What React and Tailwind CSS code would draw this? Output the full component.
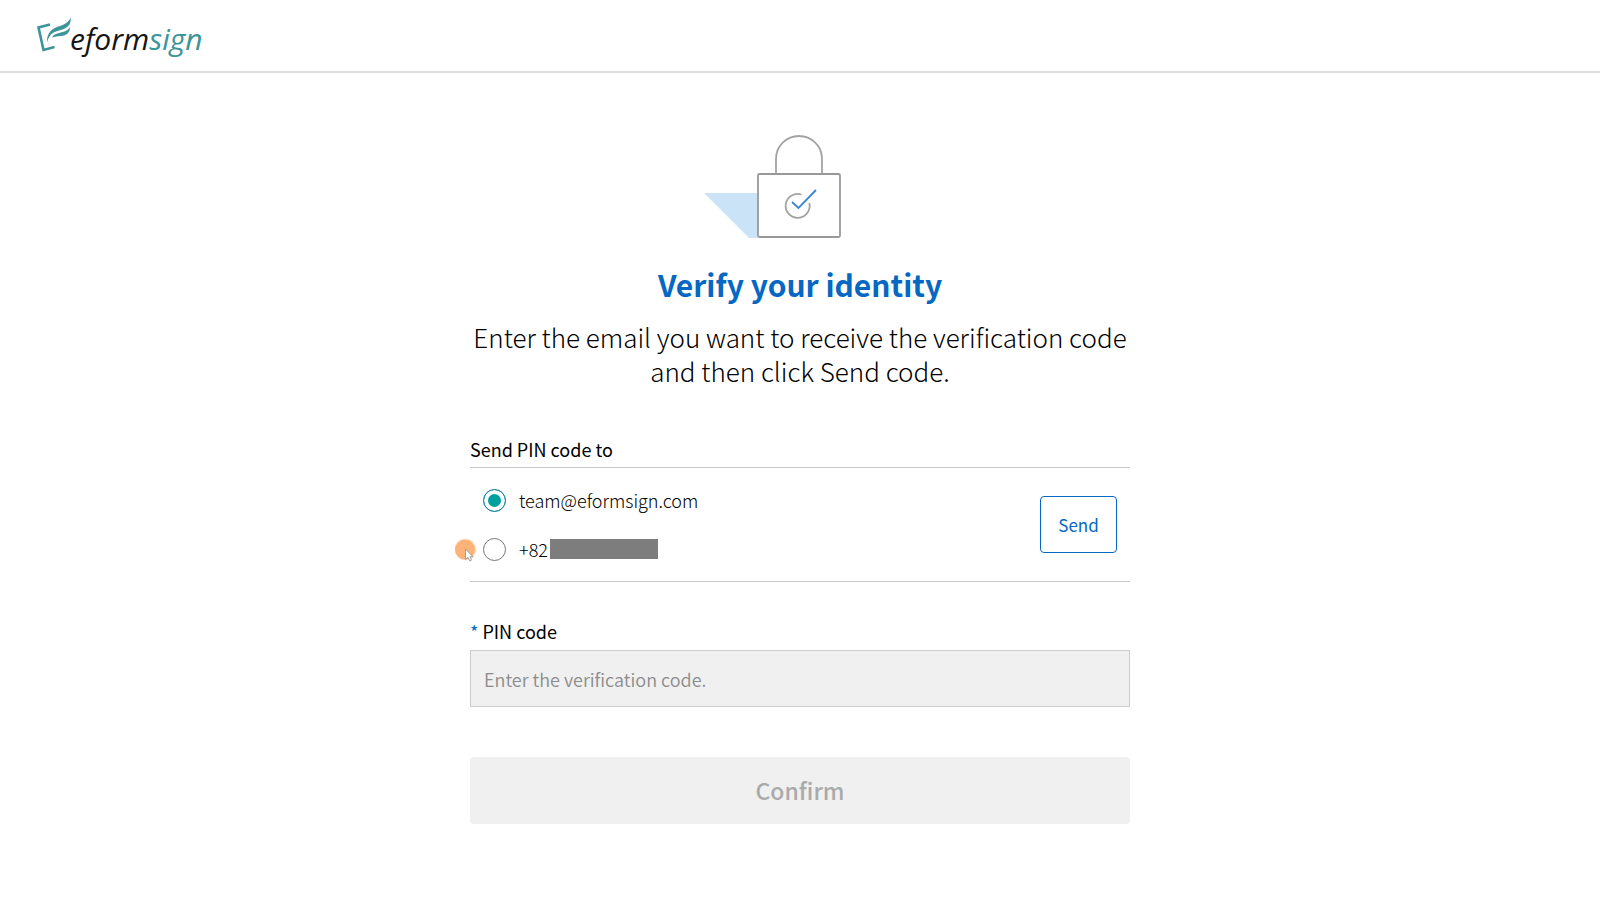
function Logo() {
  return (
    <a href="#" aria-label="eformsign home" className="flex items-end">
      <svg className="mb-0.5 h-10 w-9" viewBox="0 0 36 40" fill="none" aria-hidden="true">
        <path d="M14 9.500 L2.500 12.500 L7.500 35 L18.500 32" stroke="#3d949a" strokeWidth="2.600" />
        <path d="M11 27.500 C10.500 17 17 13 24 11 C30 9 34 6 34.500 2 C36 9.500 31 14 23 15.500 C16.500 17 13 20 11 27.500 Z" fill="#3d949a" />
        <path d="M16 22.500 C18 18.500 23 18 27 17 C31 16 33 14 34 11.500 C34 18 30.500 20.500 25 21 C21.500 21.500 19 21.500 16 22.500 Z" fill="#3d949a" />
      </svg>
      <span className="-ml-0.5 font-['Open_Sans','Noto_Sans',sans-serif] text-[30px] leading-9 italic text-[#151515]">
        eform<span className="text-[#3d949a]">sign</span>
      </span>
    </a>
  );
}

function LockArt() {
  return (
    <svg className="h-[106px] w-48" viewBox="0 0 192 106" fill="none" aria-hidden="true">
      <path d="M0 59 H54 V104 H45 Z" fill="#cbe3f7" />
      <path d="M72 39 V25 A23 23 0 0 1 118 25 V39" stroke="#a3a3a3" strokeWidth="1.800" />
      <rect x="54" y="40" width="82" height="63" rx="1.500" fill="#fff" stroke="#999" strokeWidth="1.800" />
      <path d="M97.500 60.500 A12 12 0 1 0 105.300 69" stroke="#a3a3a3" strokeWidth="1.800" />
      <path d="M88 68 L94.500 74 L112 56" stroke="#3a86d4" strokeWidth="1.800" />
    </svg>
  );
}

function Pointer() {
  return (
    <svg className="pointer-events-none absolute top-px -left-4 size-6" viewBox="0 0 24 24" aria-hidden="true">
      <circle cx="10.500" cy="11.500" r="11" fill="#fee6d0" />
      <circle cx="10" cy="11.500" r="10" fill="#fdb277" />
      <path d="M10.500 11 V21.500 L13 19.300 L14.800 23 L16.500 22.200 L15 18.700 H18 Z" fill="#fff" stroke="#999" strokeWidth="0.900" />
    </svg>
  );
}

const radio =
  "size-[23px] shrink-0 appearance-none rounded-full border border-[#777] bg-white checked:border-[#1a7fa5] checked:bg-[#00a0a0] checked:shadow-[inset_0_0_0_4px_white]";

export default function App() {
  return (
    <div className="min-h-screen bg-white font-['Noto_Sans_CJK_KR',sans-serif] text-black">
      <header className="flex h-[73px] items-center border-b-2 border-[#dedede] px-9">
        <Logo />
      </header>
      <main className="mx-auto flex max-w-[660px] flex-col pt-[61px]">
        <div className="flex justify-center">
          <LockArt />
        </div>
        <h1 className="mt-[22px] text-center text-[30px] leading-[44px] font-bold text-[#0668c3]">Verify your identity</h1>
        <p className="mt-3.5 text-center text-[26px] leading-[34px] font-light">
          Enter the email you want to receive the verification code
          <br />
          and then click Send code.
        </p>
        <form onSubmit={(e) => e.preventDefault()}>
          <fieldset className="mt-[47px]">
            <legend className="pb-1 text-lg leading-7">Send PIN code to</legend>
            <div className="flex items-center justify-between border-y border-[#c8c8c8] px-[13px] py-5">
              <div className="flex flex-col gap-[25px]">
                <label className="flex h-6 items-center gap-[13px] text-lg font-light">
                  <input type="radio" name="target" defaultChecked className={radio} />
                  team@eformsign.com
                </label>
                <label className="relative flex h-6 items-center gap-[13px] text-lg font-light">
                  <input type="radio" name="target" aria-label="Phone number" className={radio} />
                  <span className="flex items-center">
                    +82
                    <span className="ml-0.5 h-5 w-[108px] bg-[#7d7d7d]" />
                  </span>
                  <span className="absolute top-0 -left-3">
                    <Pointer />
                  </span>
                </label>
              </div>
              <button type="button" className="h-[57px] w-[77px] rounded border border-[#0668c3] text-[17px] text-[#0668c3]">
                Send
              </button>
            </div>
          </fieldset>
          <label htmlFor="pin" className="mt-[35px] block text-lg leading-7">
            <span className="text-[#0668c3]">*</span> PIN code
          </label>
          <input
            id="pin"
            type="text"
            disabled
            placeholder="Enter the verification code."
            className="mt-[5px] h-[57px] w-full border border-[#ccc] bg-[#f0f0f0] px-[13px] text-lg font-[350] placeholder:text-[#8c8c8c]"
          />
          <button type="submit" disabled className="mt-[50px] h-[67px] w-full rounded bg-[#f0f0f0] text-[23px] font-medium text-[#aaa]">
            Confirm
          </button>
        </form>
      </main>
    </div>
  );
}
